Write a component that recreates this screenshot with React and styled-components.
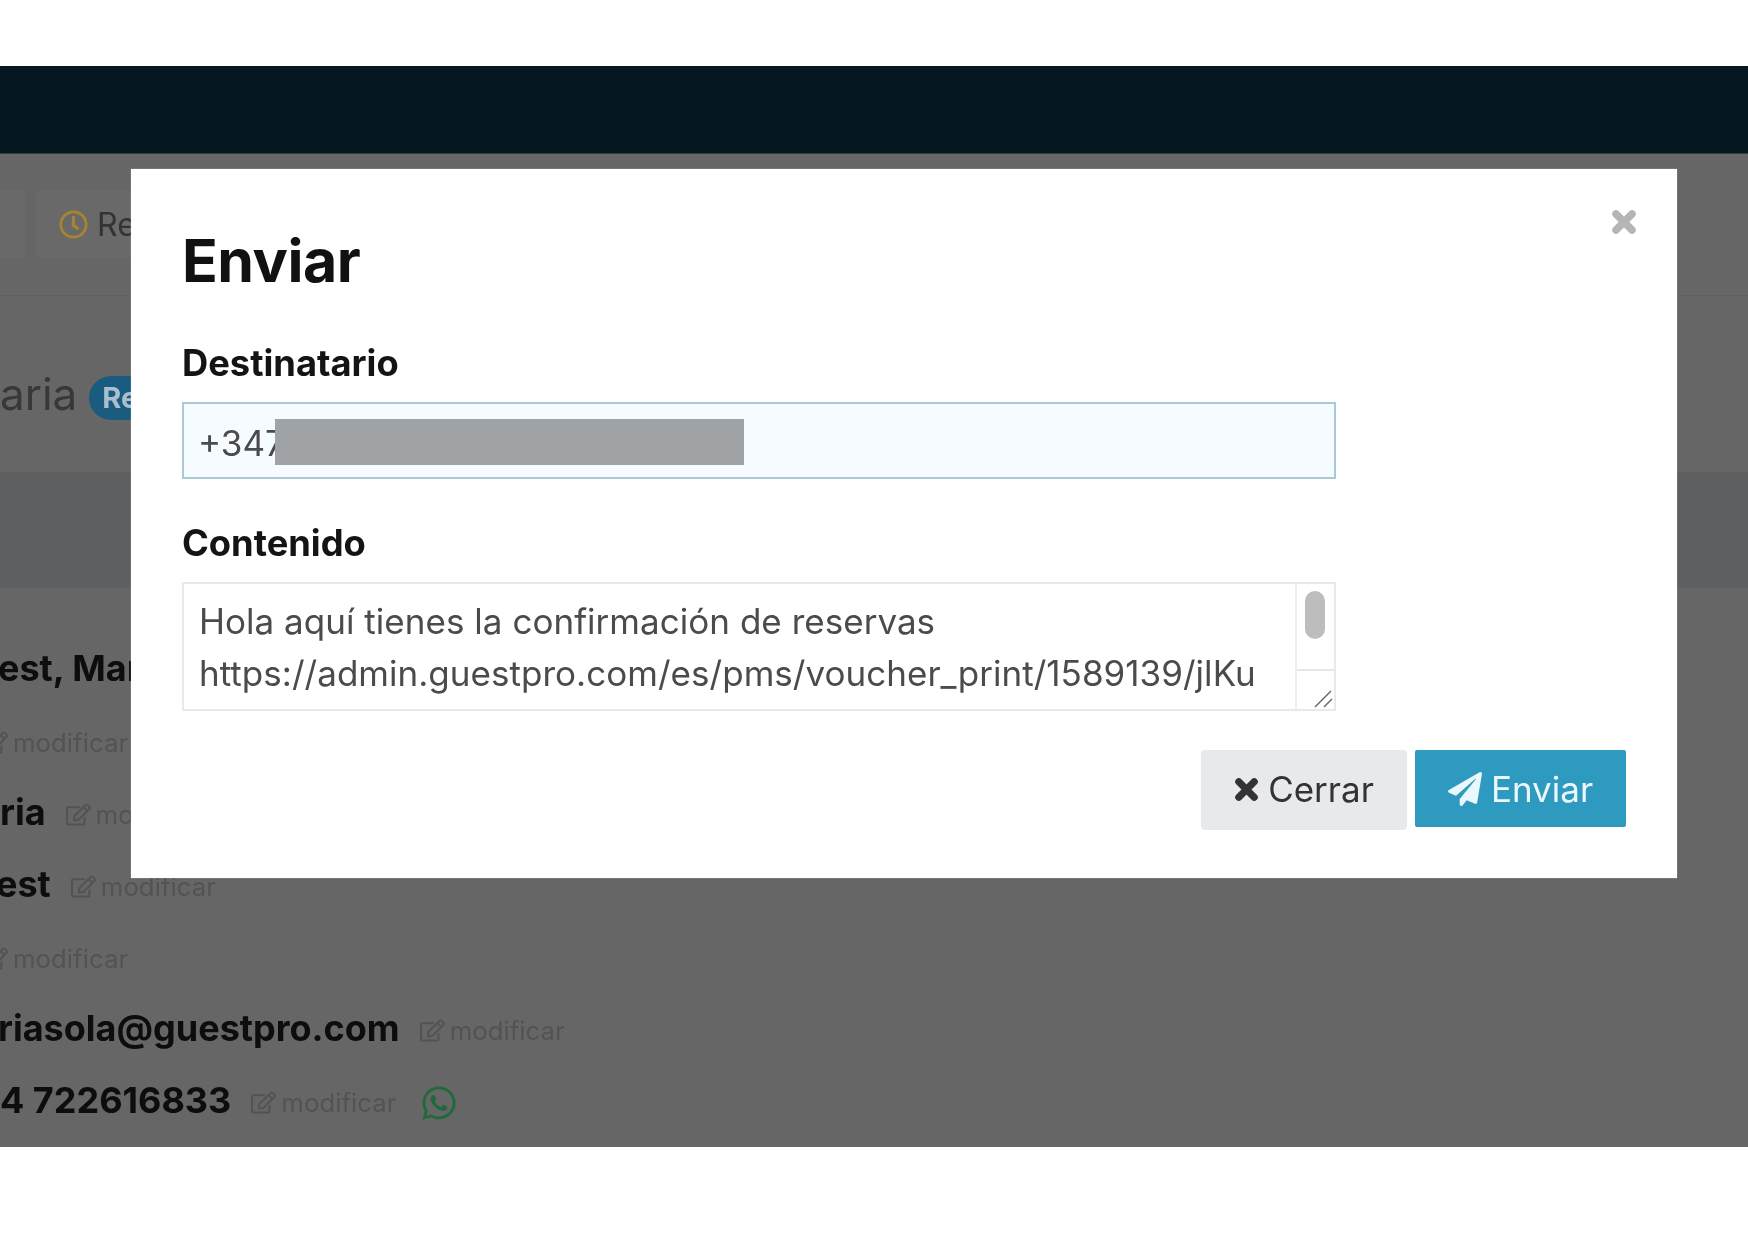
import React from "react";
import styled, { createGlobalStyle } from "styled-components";
import { FaPaperPlane, FaRegClock, FaRegEdit, FaWhatsapp } from "react-icons/fa";

const Global = createGlobalStyle`
  html, body { margin: 0; padding: 0; background: #fff; }
  body { font-family: Inter, "Liberation Sans", sans-serif; }
  * { box-sizing: border-box; }
`;

const Page = styled.div`
  width: 1748px;
  height: 1240px;
  padding: 66px 0 93px;
  background: #fff;
  overflow: hidden;
  filter: blur(0.6px);
`;
const Stage = styled.div`
  position: relative;
  height: 1081px;
  background: #666666;
  overflow: hidden;
`;
const NavBar = styled.div`
  height: 88px;
  background: #051720;
  border-bottom: 1px solid #333c40;
`;
const Toolbar = styled.div`
  height: 142px;
  display: flex;
  align-items: flex-start;
  gap: 11px;
  padding-top: 36px;
  border-bottom: 1px solid #606060;
`;
const ToolButton = styled.div`
  width: ${(p) => p.$w}px;
  height: 68px;
  display: flex;
  align-items: center;
  gap: 9px;
  padding-left: ${(p) => p.$pad || 0}px;
  background: #696969;
  border-radius: 0 4px 4px 0;
  color: #333;
  font-size: 32px;
  white-space: nowrap;
  overflow: hidden;
`;
const Heading = styled.div`
  height: 176px;
  display: flex;
  align-items: center;
  gap: 12px;
  padding-top: 20px;
`;
const HeadingText = styled.span`
  color: #383838;
  font-size: 44px;
`;
const Badge = styled.span`
  width: 120px;
  height: 44px;
  margin-top: 8px;
  border-radius: 22px;
  background: #1a5c7f;
  color: #a9bfcb;
  font-size: 29px;
  font-weight: 700;
  line-height: 44px;
  padding-left: 13px;
`;
const Band = styled.div`
  height: 116px;
  background: #5e5f60;
`;
const Details = styled.div`
  padding-top: 44px;
`;
const Row = styled.div`
  height: 72px;
  display: flex;
  align-items: center;
  gap: 20px;
  margin-left: ${(p) => p.$shift || 0}px;
  white-space: nowrap;
`;
const Value = styled.span`
  color: #0d0d0d;
  font-size: 36px;
  font-weight: 700;
`;
const Modify = styled.span`
  display: inline-flex;
  align-items: center;
  gap: 5px;
  color: #535353;
  font-size: 25.8px;
  padding-top: 4px;
`;
const Whats = styled(FaWhatsapp)`
  color: #1e6b39;
  font-size: 38px;
  margin: 6px 0 0 4px;
`;

const Modal = styled.div`
  position: absolute;
  top: 103px;
  left: 131px;
  width: 1546px;
  height: 709px;
  padding: 59px 51px 0;
  background: #fff;
  box-shadow: 0 0 1px rgba(255, 255, 255, 0.6);
`;
const CloseSlot = styled.div`
  position: absolute;
  top: 40px;
  right: 40px;
  width: 26px;
  height: 26px;
  color: #b5b5b5;
`;
const Title = styled.h2`
  margin: 0 0 49px;
  color: #111;
  font-size: 59px;
  font-weight: 700;
  line-height: 66px;
  letter-spacing: -0.5px;
`;
const Label = styled.div`
  color: #141414;
  font-size: 36.3px;
  font-weight: 700;
  line-height: 40px;
  margin-bottom: 19px;
`;
const Field = styled.div`
  width: 1154px;
  border: 2px solid ${(p) => (p.$active ? "#a9c9d6" : "#e9e9e9")};
  background: ${(p) => (p.$active ? "#f5fbfe" : "#fff")};
  color: #4b4b4b;
  font-size: 35px;
`;
const PhoneField = styled(Field)`
  position: relative;
  height: 77px;
  line-height: 78px;
  padding-left: 14px;
  margin-bottom: 44px;
`;
const Redaction = styled.div`
  position: absolute;
  top: 15px;
  left: 91px;
  width: 469px;
  height: 46px;
  background: #9fa3a6;
`;
const AreaField = styled(Field)`
  height: 129px;
  display: flex;
`;
const AreaText = styled.div`
  flex: 1;
  padding: 11px 0 0 15px;
  line-height: 52px;
  letter-spacing: 0.03px;
  white-space: nowrap;
  overflow: hidden;
`;
const ScrollCol = styled.div`
  width: 39px;
  display: flex;
  flex-direction: column;
  border-left: 2px solid #eeeeee;
`;
const ScrollTrack = styled.div`
  flex: 1;
  padding: 7px 0 0 8px;
`;
const Thumb = styled.div`
  width: 20px;
  height: 48px;
  border-radius: 10px;
  background: #bdbdbd;
`;
const Grip = styled.div`
  height: 40px;
  border-top: 2px solid #e6e6e6;
  display: flex;
  justify-content: flex-end;
  align-items: flex-end;
`;
const Actions = styled.div`
  display: flex;
  justify-content: flex-end;
  align-items: flex-start;
  gap: 8px;
  margin-top: 39px;
`;
const Button = styled.div`
  height: ${(p) => (p.$primary ? 77 : 80)}px;
  width: ${(p) => (p.$primary ? 211 : 206)}px;
  display: flex;
  align-items: center;
  justify-content: center;
  gap: 9px;
  padding-bottom: ${(p) => (p.$primary ? 0 : 2)}px;
  border-radius: ${(p) => (p.$primary ? 2 : 4)}px;
  background: ${(p) => (p.$primary ? "#2e9ac0" : "#e8e9ec")};
  color: ${(p) => (p.$primary ? "#eaf7fb" : "#333")};
  font-size: 35px;
`;

const ChunkyX = ({ size }) => (
  <svg width={size} height={size} viewBox="0 0 26 26" fill="none" stroke="currentColor" strokeWidth="7.5" strokeLinecap="round">
    <path d="M5 5 L21 21 M21 5 L5 21" />
  </svg>
);

const Mod = () => (
  <Modify>
    <FaRegEdit size={25} />
    modificar
  </Modify>
);

export default function App() {
  return (
    <>
      <Global />
      <Page>
        <Stage>
          <NavBar />
          <Toolbar>
            <ToolButton $w={25} />
            <ToolButton $w={130} $pad={23}>
              <FaRegClock color="#a9832f" size={29} />
              Re
            </ToolButton>
          </Toolbar>
          <Heading>
            <HeadingText>aria</HeadingText>
            <Badge>Reserva</Badge>
          </Heading>
          <Band />
          <Details>
            <Row $shift={-2}><Value>est, Mar</Value></Row>
            <Row $shift={-17}><Mod /></Row>
            <Row><Value>ria</Value><Mod /></Row>
            <Row $shift={-4}><Value>est</Value><Mod /></Row>
            <Row $shift={-17}><Mod /></Row>
            <Row $shift={-2}><Value>riasola@guestpro.com</Value><Mod /></Row>
            <Row><Value>4 722616833</Value><Mod /><Whats /></Row>
          </Details>
          <Modal>
            <CloseSlot><ChunkyX size={26} /></CloseSlot>
            <Title>Enviar</Title>
            <Label>Destinatario</Label>
            <PhoneField $active>
              +347
              <Redaction />
            </PhoneField>
            <Label>Contenido</Label>
            <AreaField>
              <AreaText>
                Hola aquí tienes la confirmación de reservas
                <br />
                https://admin.guestpro.com/es/pms/voucher_print/1589139/jlKu
              </AreaText>
              <ScrollCol>
                <ScrollTrack><Thumb /></ScrollTrack>
                <Grip>
                  <svg width="22" height="22" viewBox="0 0 22 22" fill="none" stroke="#666" strokeWidth="1.5">
                    <path d="M3 20 L19 4" />
                    <path d="M12 20 L20 12" />
                  </svg>
                </Grip>
              </ScrollCol>
            </AreaField>
            <Actions>
              <Button>
                <ChunkyX size={25} />
                Cerrar
              </Button>
              <Button $primary>
                <FaPaperPlane size={34} />
                Enviar
              </Button>
            </Actions>
          </Modal>
        </Stage>
      </Page>
    </>
  );
}
